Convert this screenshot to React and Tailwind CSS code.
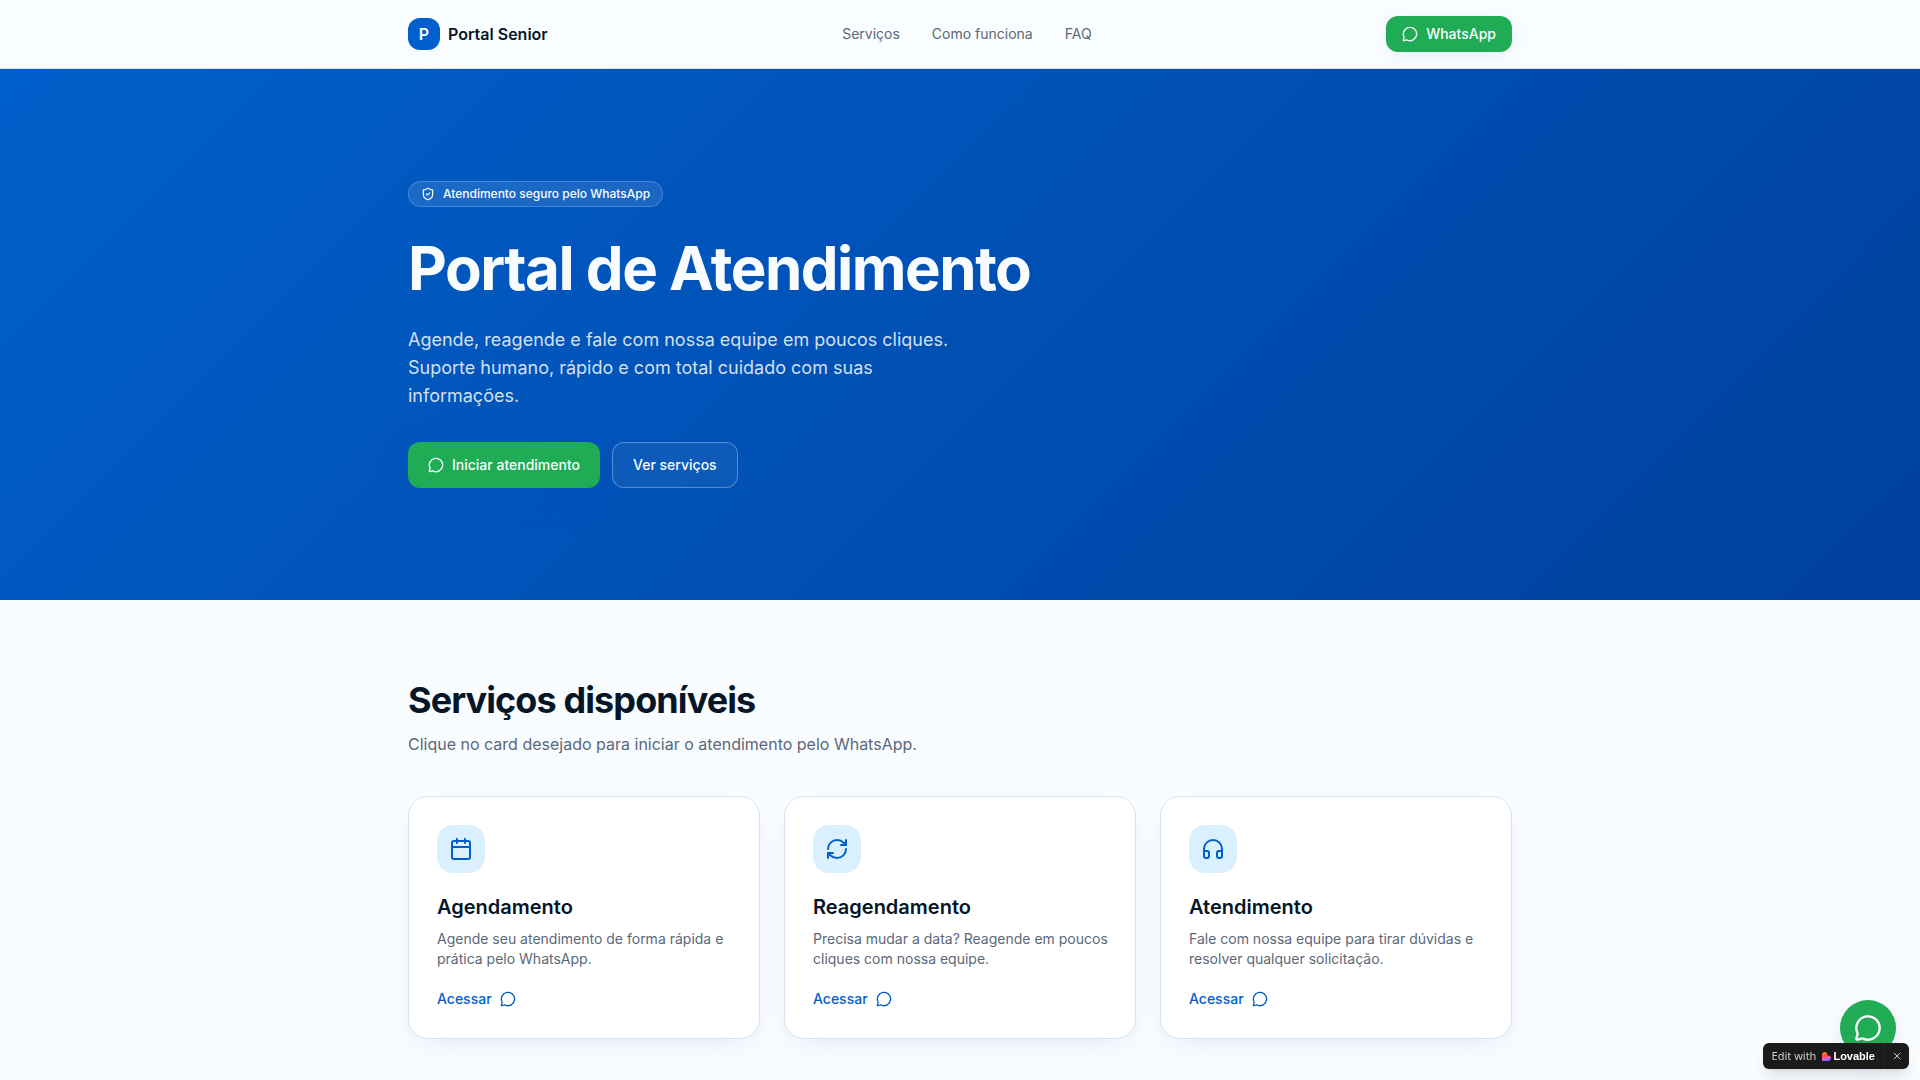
import React from 'react';
import { Calendar, Headphones, MessageCircle, RefreshCw, ShieldCheck, X } from 'lucide-react';

const WHATSAPP_URL = 'https://wa.me/';

const navLinks = [
  { label: 'Serviços', href: '#servicos' },
  { label: 'Como funciona', href: '#como-funciona' },
  { label: 'FAQ', href: '#faq' },
];

const services = [
  {
    icon: Calendar,
    title: 'Agendamento',
    description: 'Agende seu atendimento de forma rápida e prática pelo WhatsApp.',
  },
  {
    icon: RefreshCw,
    title: 'Reagendamento',
    description: 'Precisa mudar a data? Reagende em poucos cliques com nossa equipe.',
  },
  {
    icon: Headphones,
    title: 'Atendimento',
    description: 'Fale com nossa equipe para tirar dúvidas e resolver qualquer solicitação.',
  },
];

function Header() {
  return (
    <header className="border-b border-[#d9e2ee] bg-[#f9fdff]">
      <div className="mx-auto flex max-w-6xl items-center justify-between px-6 py-4">
        <a href="#" className="flex items-center gap-2">
          <span className="flex size-8 items-center justify-center rounded-xl bg-[#0060cb] font-semibold text-[#f9fcff]">
            P
          </span>
          <span className="font-semibold">Portal Senior</span>
        </a>
        <nav className="flex items-center gap-8 text-sm text-[#5b6878]">
          {navLinks.map((link) => (
            <a key={link.href} href={link.href} className="hover:text-[#061627]">
              {link.label}
            </a>
          ))}
        </nav>
        <a
          href={WHATSAPP_URL}
          className="flex items-center gap-2 rounded-xl bg-[#20ab55] px-4 py-2 text-sm font-medium text-[#f9fcff] shadow-[0_4px_20px_-4px_rgba(0,80,200,0.12)]"
        >
          <MessageCircle className="size-4" />
          WhatsApp
        </a>
      </div>
    </header>
  );
}

function Hero() {
  return (
    <section className="bg-[linear-gradient(135deg,#0060cb_0%,#00409d_100%)] text-[#f9fcff]">
      <div className="mx-auto max-w-6xl px-6 py-28">
        <div className="max-w-2xl">
          <span className="inline-flex items-center gap-2 rounded-full border border-white/20 bg-white/10 px-3 py-1 align-top text-xs font-medium">
            <ShieldCheck className="size-3.5" />
            Atendimento seguro pelo WhatsApp
          </span>
          <h1 className="mt-6 text-6xl leading-tight font-bold tracking-tight">Portal de Atendimento</h1>
          <p className="mt-5 max-w-xl text-lg leading-7 text-[#f9fcff]/85">
            Agende, reagende e fale com nossa equipe em poucos cliques. Suporte humano, rápido e com total
            cuidado com suas informações.
          </p>
          <div className="mt-8 flex flex-wrap gap-3 text-sm font-medium">
            <a
              href={WHATSAPP_URL}
              className="flex items-center gap-2 rounded-xl bg-[#20ab55] px-5 py-3 shadow-[0_10px_40px_-10px_rgba(0,80,190,0.25)]"
            >
              <MessageCircle className="size-4" />
              Iniciar atendimento
            </a>
            <a href="#servicos" className="rounded-xl border border-white/30 bg-white/5 px-5 py-3">
              Ver serviços
            </a>
          </div>
        </div>
      </div>
    </section>
  );
}

function ServiceCard({ icon: Icon, title, description }) {
  return (
    <a
      href={WHATSAPP_URL}
      className="rounded-[20px] border border-[#d9e4f2] bg-white p-7 pb-[29px] shadow-[0_10px_30px_-10px_rgba(0,80,200,0.12)]"
    >
      <span className="flex size-12 items-center justify-center rounded-2xl bg-[#dbf0ff] text-[#0060cb]">
        <Icon className="size-6" />
      </span>
      <h3 className="mt-5 text-xl font-semibold">{title}</h3>
      <p className="mt-2 -mr-3 text-sm text-[#5b6878]">{description}</p>
      <span className="mt-5 flex items-center gap-2 text-sm font-medium text-[#0060cb]">
        Acessar
        <MessageCircle className="size-4" />
      </span>
    </a>
  );
}

function Services() {
  return (
    <section id="servicos" className="mx-auto max-w-6xl px-6 pt-20 pb-10">
      <h2 className="text-4xl font-bold tracking-tight">Serviços disponíveis</h2>
      <p className="mt-3 text-[#5b6878]">Clique no card desejado para iniciar o atendimento pelo WhatsApp.</p>
      <div className="mt-10 grid gap-6 md:grid-cols-3">
        {services.map((service) => (
          <ServiceCard key={service.title} {...service} />
        ))}
      </div>
    </section>
  );
}

function LovableMark() {
  return (
    <svg viewBox="0 0 20 20" className="size-[9px]" aria-hidden="true">
      <defs>
        <linearGradient id="lovable" x1="0.2" y1="0" x2="0.4" y2="1">
          <stop offset="0.1" stopColor="#ff7a1a" />
          <stop offset="0.45" stopColor="#ff4a3d" />
          <stop offset="0.7" stopColor="#f55ac8" />
          <stop offset="1" stopColor="#5a6cff" />
        </linearGradient>
      </defs>
      <path
        fill="url(#lovable)"
        d="M0 5.5C0 2.4 2.6 0 6 0s6 2.4 6 5.5V8h2.2C17.4 8 20 10.6 20 14s-2.6 6-5.8 6H0z"
      />
    </svg>
  );
}

function LovableBadge() {
  return (
    <aside className="fixed right-[11px] bottom-[11px] flex h-[26px] items-center rounded-md bg-[#1b1b1b] text-[11px] text-[#d0cdc6] shadow-lg">
      <a href="https://lovable.dev" className="flex items-center gap-1.5 pr-2 pl-[9px] font-['Noto_Sans',sans-serif]">
        Edit with
        <span className="flex items-center gap-0.5 font-['Liberation_Sans',sans-serif] font-bold text-white">
          <LovableMark />
          Lovable
        </span>
      </a>
      <button type="button" aria-label="Fechar" className="flex h-full w-[26px] items-center justify-center border-l border-[#272727]">
        <X className="size-3" />
      </button>
    </aside>
  );
}

export default function App() {
  return (
    <div className="min-h-screen bg-[#f9fcff] font-['Inter',sans-serif] text-[#061627] antialiased">
      <Header />
      <main>
        <Hero />
        <Services />
      </main>
      <a
        href={WHATSAPP_URL}
        aria-label="Falar no WhatsApp"
        className="fixed right-6 bottom-6 flex size-14 items-center justify-center rounded-full bg-[#20ab55] text-[#f9fcff] shadow-[0_10px_30px_-10px_rgba(0,80,200,0.25)]"
      >
        <MessageCircle className="size-7" />
      </a>
      <LovableBadge />
    </div>
  );
}
